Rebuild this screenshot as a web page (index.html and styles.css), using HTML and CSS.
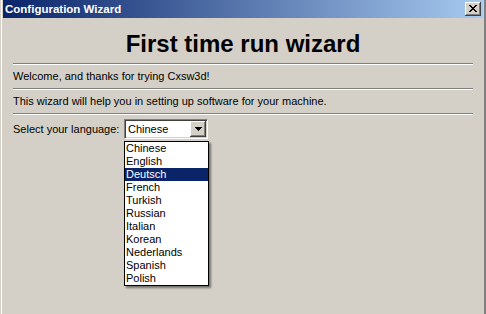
FILE: index.html
```html
<!DOCTYPE html>
<html lang="en">
<head>
  <meta charset="UTF-8">
  <title>Configuration Wizard</title>
  <link rel="stylesheet" href="styles.css">
</head>
<body>
  <div class="window">
    <div class="titlebar">
      <span class="title">Configuration Wizard</span>
      <button class="close" type="button" aria-label="Close">
        <svg width="8" height="7" viewBox="0 0 8 7" shape-rendering="crispEdges">
          <path d="M0 0h2v1H0z M6 0h2v1H6z M1 1h2v1H1z M5 1h2v1H5z M2 2h4v1H2z M3 3h2v1H3z M2 4h4v1H2z M1 5h2v1H1z M5 5h2v1H5z M0 6h2v1H0z M6 6h2v1H6z" fill="#000"/>
        </svg>
      </button>
    </div>

    <div class="content">
      <h1>First time run wizard</h1>
      <hr class="sep">
      <p class="row">Welcome, and thanks for trying Cxsw3d!</p>
      <hr class="sep">
      <p class="row">This wizard will help you in setting up software for your machine.</p>
      <hr class="sep">
      <div class="row lang">
        <label>Select your language:</label>
        <div class="combo">
          <span class="combo-value">Chinese</span>
          <span class="combo-btn">
            <svg width="7" height="4" viewBox="0 0 7 4" shape-rendering="crispEdges">
              <path d="M0 0h7v1H0z M1 1h5v1H1z M2 2h3v1H2z M3 3h1v1H3z" fill="#000"/>
            </svg>
          </span>
          <ul class="dropdown">
            <li>Chinese</li>
            <li>English</li>
            <li class="selected">Deutsch</li>
            <li>French</li>
            <li>Turkish</li>
            <li>Russian</li>
            <li>Italian</li>
            <li>Korean</li>
            <li>Nederlands</li>
            <li>Spanish</li>
            <li>Polish</li>
          </ul>
        </div>
      </div>
    </div>
  </div>
</body>
</html>
```

FILE: styles.css
```css
body { margin: 0; font-family: "Liberation Sans", Arial, sans-serif; font-size: 11px; color: #000; }

.window { width: 486px; height: 314px; box-sizing: border-box; background: #d4d0c8; padding: 0 1px 0 3px; border-right: 2px solid #808080; box-shadow: inset 1px 0 #d4d0c8, inset 2px 0 #fff; }

.titlebar { height: 18px; display: flex; align-items: center; justify-content: space-between; padding: 0 2px; background: linear-gradient(to right, #0a246a, #a6caf0); }
.title { color: #fff; font-weight: bold; font-size: 11.5px; }
.close { width: 16px; height: 14px; padding: 3px 0 0 4px; box-sizing: border-box; border: none; background: #d4d0c8; box-shadow: inset -1px -1px #404040, inset 1px 1px #fff, inset -2px -2px #808080, inset 2px 2px #d4d0c8; display: flex; align-items: flex-start; }
.close svg { display: block; }

.content { padding: 0 10px; }
h1 { margin: 0; padding: 12px 0 5px; font-size: 24px; line-height: 28px; text-align: center; }
.sep { margin: 0; height: 0; border: none; border-top: 1px solid #808080; border-bottom: 1px solid #fff; }
.row { margin: 0; height: 23px; line-height: 23px; }

.lang { display: flex; align-items: center; height: 20px; line-height: 20px; padding-top: 4px; }
.lang label { flex: 0 0 111px; }

.combo { position: relative; width: 84px; height: 20px; box-sizing: border-box; display: flex; background: #fff; border: 1px solid; border-color: #808080 #fff #fff #808080; box-shadow: inset 1px 1px #404040, inset -1px -1px #d4d0c8; padding: 1px; }
.combo-value { flex: 1; line-height: 16px; padding-left: 2px; }
.combo-btn { width: 16px; height: 16px; box-sizing: border-box; background: #d4d0c8; box-shadow: inset -1px -1px #404040, inset 1px 1px #fff, inset -2px -2px #808080, inset 2px 2px #d4d0c8; display: flex; align-items: center; justify-content: center; }
.combo-btn svg { display: block; }

.dropdown { position: absolute; top: 21px; left: -1px; width: 85px; box-sizing: border-box; margin: 0; padding: 0; list-style: none; background: #fff; border: 1px solid #000; box-shadow: 2px 2px 2px rgba(0, 0, 0, 0.45); z-index: 2; line-height: 13px; }
.dropdown li { height: 13px; padding-left: 1px; }
.dropdown .selected { background: #0a246a; color: #fff; }
```
